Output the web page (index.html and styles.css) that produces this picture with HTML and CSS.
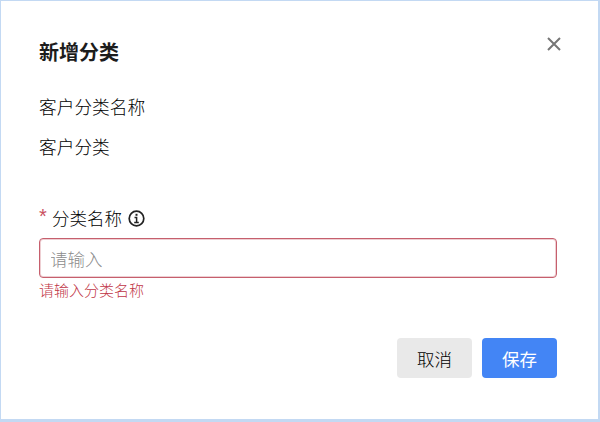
FILE: index.html
```html
<!DOCTYPE html>
<html lang="zh-CN">
<head>
<meta charset="utf-8">
<title>新增分类</title>
<link rel="stylesheet" href="styles.css">
</head>
<body>
<div class="dialog">
  <header class="head">
    <h1 class="title">新增分类</h1>
    <button class="close" type="button" aria-label="关闭">
      <svg width="14" height="14" viewBox="0 0 14 14"><path d="M1 1L13 13M13 1L1 13" stroke="#767676" stroke-width="2" fill="none"/></svg>
    </button>
  </header>
  <div class="info">
    <p class="info-line">客户分类名称</p>
    <p class="info-line">客户分类</p>
  </div>
  <div class="label-row">
    <span class="star">*</span>
    <span class="label">分类名称</span>
    <svg class="tip" width="17" height="17" viewBox="0 0 17 17"><circle cx="8.5" cy="8.5" r="7.3" fill="none" stroke="#222" stroke-width="1.7"/><rect x="7.5" y="3.8" width="2" height="2" fill="#222"/><path d="M6.5 7.4H8.6V12M6.2 12.4H10.8" fill="none" stroke="#222" stroke-width="1.5"/></svg>
  </div>
  <input class="input" type="text" placeholder="请输入">
  <div class="error">请输入分类名称</div>
  <footer class="foot">
    <button class="btn btn-cancel" type="button">取消</button>
    <button class="btn btn-save" type="button">保存</button>
  </footer>
</div>
</body>
</html>
```
FILE: styles.css
```css
* { box-sizing: border-box; }
html, body { margin: 0; padding: 0; }
body {
  width: 600px;
  height: 422px;
  overflow: hidden;
  background: #fff;
  font-family: "Noto Sans CJK SC", "Noto Sans", sans-serif;
  font-weight: 300;
  color: #000;
}
.dialog {
  width: 600px;
  height: 422px;
  background: #fff;
  border-style: solid;
  border-color: #c3d9f3;
  border-width: 1px 2px 3px 1px;
  padding: 0 41px 0 38px;
  display: flex;
  flex-direction: column;
}
.head {
  display: flex;
  justify-content: space-between;
  height: 68px;
  padding-top: 36px;
}
.title {
  margin: 0;
  font-size: 20px;
  line-height: 30px;
  font-weight: 700;
  color: #1c1c1c;
}
.close {
  border: 0;
  background: none;
  padding: 0;
  margin: 0 -4px 0 0;
  height: 14px;
  display: flex;
}
.info-line {
  margin: 0 0 14px;
  font-size: 17.7px;
  line-height: 26px;
}
.info { height: 139px; padding-top: 24px; }
.label-row {
  display: flex;
  align-items: center;
  height: 26px;
  font-size: 17.5px;
  line-height: 26px;
  margin-top: -3px;
}
.star { color: #c9505f; width: 13px; font-family: "Liberation Sans", sans-serif; font-size: 20px; align-self: flex-start; line-height: 22px; }
.tip { margin-left: 6px; }
.input {
  display: block;
  width: 518px;
  height: 40px;
  margin-top: 7px;
  border: 1px solid #c65f6d;
  box-shadow: inset 0 0 0 1px rgba(198, 95, 109, 0.3);
  border-radius: 4px;
  padding: 0 11px 0 11px;
  text-indent: -1px;
  font: inherit;
  font-size: 17.5px;
  outline: none;
  flex: none;
}
.input::placeholder { color: #8c8c8c; opacity: 1; }
.error {
  font-size: 15px;
  font-weight: 300;
  line-height: 22px;
  margin-top: 1px;
  color: #bf3546;
}
.foot {
  display: flex;
  justify-content: flex-end;
  gap: 10px;
  margin-top: 37px;
}
.btn {
  width: 75px;
  height: 40px;
  border: 0;
  border-radius: 4px;
  padding: 0;
  font: inherit;
  font-size: 17.5px;
}
.btn-cancel { background: #e9e9e9; color: #000; }
.btn-save { background: #4385f5; color: #fff; font-weight: 400; }
```
